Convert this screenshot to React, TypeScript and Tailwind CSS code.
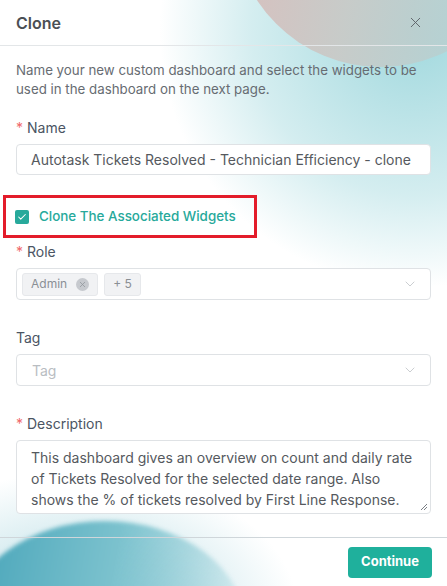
import { X, ChevronDown, Check } from "lucide-react";

function Label({ text, required }: { text: string; required?: boolean }) {
  return (
    <div className="text-[14px] leading-5 text-[#4b5563] mb-[6px]">
      {required && <span className="text-[#f0686b] mr-[4px]">*</span>}
      {text}
    </div>
  );
}

export default function App() {
  return (
    <div
      className="relative w-[447px] h-[586px] overflow-hidden bg-white"
      style={{ fontFamily: "Inter, 'Noto Sans', sans-serif" }}
    >
      {/* decorative blobs */}
      <div className="absolute -top-[230px] right-[-230px] w-[520px] h-[520px] rounded-full bg-[radial-gradient(circle,rgba(150,212,218,0.9)_0%,rgba(170,220,225,0.5)_45%,rgba(255,255,255,0)_70%)]" />
      <div className="absolute -top-[228px] left-[233px] w-[295px] h-[295px] rounded-full bg-[linear-gradient(100deg,#dcb6b4_0%,#c9c9c6_45%,#a9d6da_100%)] opacity-90" />
      <div className="absolute top-[470px] -left-[140px] w-[440px] h-[280px] rounded-full bg-[radial-gradient(ellipse,rgba(140,200,212,0.7)_0%,rgba(255,255,255,0)_70%)]" />
      <div className="absolute top-[521px] -left-[35px] w-[280px] h-[210px] rounded-[50%] bg-[linear-gradient(100deg,#45a3b8_0%,#7cc2ce_50%,rgba(220,240,243,0.2)_100%)] blur-[2px]" />

      <div className="relative flex flex-col h-full">
        {/* header */}
        <div className="flex items-center justify-between h-[46px] px-[16px] border-b border-[#e3e6e8]">
          <span className="text-[16px] font-semibold text-[#4b4f55]">Clone</span>
          <X className="w-[17px] h-[17px] text-[#5b6066] mr-[7px]" strokeWidth={1.3} />
        </div>

        {/* body */}
        <div className="flex-1 px-[16px] pt-[15px]">
          <p className="text-[13.3px] leading-[19px] text-[#676c72] mb-[19px] whitespace-nowrap">
            Name your new custom dashboard and select the widgets to be
            <br />
            used in the dashboard on the next page.
          </p>

          <Label text="Name" required />
          <div className="h-[31px] rounded-[4px] border border-[#dfe2e5] bg-white flex items-center px-[14px] text-[14px] text-[#55595e] whitespace-nowrap overflow-hidden">
            Autotask Tickets Resolved - Technician Efficiency - clone
          </div>

          <div className="-ml-[13px] mt-[20px] w-[254px] h-[43px] border-[3px] border-[#e31c2a] flex items-center pl-[9px] gap-[10px]">
            <div className="w-[14px] h-[14px] rounded-[2px] bg-[#27a99b] flex items-center justify-center">
              <Check className="w-[10px] h-[10px] text-white" strokeWidth={2.5} />
            </div>
            <span className="text-[13.4px] font-medium text-[#27a99b]">Clone The Associated Widgets</span>
          </div>

          <div className="mt-[4px]">
            <Label text="Role" required />
          </div>
          <div className="h-[32px] rounded-[4px] border border-[#dfe2e5] bg-white flex items-center pl-[5px] pr-[12px] gap-[6px]">
            <div className="h-[23px] px-[8px] rounded-[3px] bg-[#f1f2f4] border border-[#e6e8eb] flex items-center gap-[9px] text-[12px] text-[#8a8f95]">
              Admin
              <span className="w-[13px] h-[13px] rounded-full bg-[#c6c9ce] flex items-center justify-center">
                <X className="w-[9px] h-[9px] text-[#8f949a]" strokeWidth={2} />
              </span>
            </div>
            <div className="h-[23px] px-[8px] rounded-[3px] bg-[#f1f2f4] border border-[#e6e8eb] flex items-center text-[12px] text-[#8a8f95]">
              + 5
            </div>
            <ChevronDown className="ml-auto w-[16px] h-[16px] text-[#c3c6ca]" strokeWidth={1.3} />
          </div>

          <div className="mt-[28px]">
            <Label text="Tag" />
          </div>
          <div className="h-[32px] rounded-[4px] border border-[#dfe2e5] bg-white flex items-center pl-[15px] pr-[12px] text-[14px] text-[#b9bdc2]">
            Tag
            <ChevronDown className="ml-auto w-[16px] h-[16px] text-[#c3c6ca]" strokeWidth={1.3} />
          </div>

          <div className="mt-[28px]">
            <Label text="Description" required />
          </div>
          <div className="relative h-[74px] rounded-[4px] border border-[#dfe2e5] bg-white px-[14px] pt-[6px] text-[14px] leading-[21px] text-[#55595e] whitespace-nowrap overflow-hidden">
            This dashboard gives an overview on count and daily rate
            <br />
            of Tickets Resolved for the selected date range. Also
            <br />
            shows the % of tickets resolved by First Line Response.
            <svg className="absolute right-[2px] bottom-[2px]" width="8" height="8" viewBox="0 0 8 8">
              <path d="M7 1 L1 7 M7 4 L4 7" stroke="#7a7f85" strokeWidth="1" />
            </svg>
          </div>
        </div>

        {/* footer */}
        <div className="h-[49px] border-t border-[#cfd6da] flex items-center justify-end px-[15px]">
          <button className="h-[31px] w-[84px] rounded-[4px] bg-[#1fb09c] text-white text-[13px] font-bold">
            Continue
          </button>
        </div>
      </div>
    </div>
  );
}
